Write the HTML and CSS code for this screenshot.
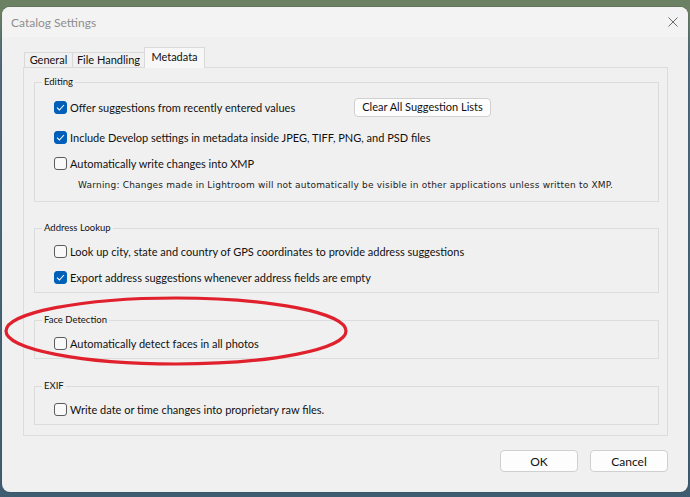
FILE: index.html
```html
<!DOCTYPE html>
<html lang="en">
<head>
    <meta charset="UTF-8">
    <title>Catalog Settings</title>
    <link rel="stylesheet" href="styles.css">
</head>
<body>
    <div class="dialog">
        <div class="titlebar">
            <span class="title">Catalog Settings</span>
            <svg class="close" width="10" height="10" viewBox="0 0 10 10">
                <path d="M0.5 0.5 L9.5 9.5 M9.5 0.5 L0.5 9.5" stroke="#6b6b6b" stroke-width="1" fill="none"/>
            </svg>
        </div>

        <div class="tabs">
            <span class="tab tab-general">General</span>
            <span class="tab tab-files">File Handling</span>
            <span class="tab tab-meta active">Metadata</span>
        </div>

        <div class="panel">
            <div class="group">
                <span class="legend">Editing</span>
                <div class="rows">
                    <div class="row row-tall">
                        <span class="check on"><svg width="9" height="7" viewBox="0 0 9 7"><path d="M1 3.6 L3.4 6 L8 1" stroke="#fff" stroke-width="1.1" fill="none"/></svg></span>
                        <span class="label label-wide">Offer suggestions from recently entered values</span>
                        <button class="btn btn-clear">Clear All Suggestion Lists</button>
                    </div>
                    <div class="row">
                        <span class="check on"><svg width="9" height="7" viewBox="0 0 9 7"><path d="M1 3.6 L3.4 6 L8 1" stroke="#fff" stroke-width="1.1" fill="none"/></svg></span>
                        <span class="label">Include Develop settings in metadata inside JPEG, TIFF, PNG, and PSD files</span>
                    </div>
                    <div class="row">
                        <span class="check"></span>
                        <span class="label">Automatically write changes into XMP</span>
                    </div>
                    <div class="warning">Warning: Changes made in Lightroom will not automatically be visible in other applications unless written to XMP.</div>
                </div>
            </div>

            <div class="group">
                <span class="legend">Address Lookup</span>
                <div class="rows">
                    <div class="row">
                        <span class="check"></span>
                        <span class="label">Look up city, state and country of GPS coordinates to provide address suggestions</span>
                    </div>
                    <div class="row">
                        <span class="check on"><svg width="9" height="7" viewBox="0 0 9 7"><path d="M1 3.6 L3.4 6 L8 1" stroke="#fff" stroke-width="1.1" fill="none"/></svg></span>
                        <span class="label">Export address suggestions whenever address fields are empty</span>
                    </div>
                </div>
            </div>

            <div class="group">
                <span class="legend">Face Detection</span>
                <div class="rows">
                    <div class="row">
                        <span class="check"></span>
                        <span class="label">Automatically detect faces in all photos</span>
                    </div>
                </div>
            </div>

            <div class="group">
                <span class="legend">EXIF</span>
                <div class="rows">
                    <div class="row">
                        <span class="check"></span>
                        <span class="label">Write date or time changes into proprietary raw files.</span>
                    </div>
                </div>
            </div>
        </div>

        <div class="footer">
            <button class="btn btn-dialog">OK</button>
            <button class="btn btn-dialog">Cancel</button>
        </div>
    </div>

    <!-- red marker drawn over the screenshot -->
    <svg class="marker" width="350" height="76" viewBox="0 0 350 76">
        <ellipse cx="174" cy="37" rx="170" ry="33" fill="none" stroke="#e0202c" stroke-width="3.2"/>
    </svg>
</body>
</html>
```

FILE: styles.css
```css
body {
    margin: 0;
    width: 690px;
    height: 497px;
    overflow: hidden;
    background: linear-gradient(180deg, #6c8064 0px, #6c8064 12px, #4f6a7c 60px, #3f5d70 100%);
    font-family: Lato, "Open Sans", sans-serif;
    font-size: 11px;
    color: #111;
}
.dialog {
    width: 686px;
    height: 485px;
    margin: 7px 0 0 2px;
    background-color: #f0f0f0;
    border-radius: 8px;
    box-shadow: 0 0 0 1px rgba(0,0,0,0.08);
    display: flex;
    flex-direction: column;
}
.titlebar {
    height: 30px;
    display: flex;
    align-items: center;
    justify-content: space-between;
    padding: 0 10px 0 9px;
    background-color: #f3f3f3;
    border-radius: 8px 8px 0 0;
}
.title {
    color: #8e8e8e;
    font-size: 12px;
}
.close {
    display: block;
    margin-top: -1px;
}
.tabs {
    position: relative;
    display: flex;
    align-items: flex-end;
    height: 21px;
    margin: 10px 0 -1px 22px;
    white-space: nowrap;
}
.tab {
    box-sizing: border-box;
    height: 16px;
    line-height: 14px;
    border: 1px solid #d9d9d9;
    border-right: none;
    background-color: #f0f0f0;
    text-align: center;
}
.tab-general { width: 48px; }
.tab-files { width: 72px; }
.tab-meta { width: 61px; }
.tab.active {
    height: 21px;
    line-height: 18px;
    border-right: 1px solid #d9d9d9;
    border-bottom: none;
    background-color: #f7f7f7;
}
.panel {
    width: 645px;
    height: 369px;
    box-sizing: border-box;
    margin-left: 21px;
    padding: 14px 8px 0 10px;
    border: 1px solid #dcdcdc;
    background-color: #f0f0f0;
}
.group {
    border: 1px solid #dcdcdc;
    padding-bottom: 2px;
    margin-bottom: 27px;
}
.group:first-child {
    margin-bottom: 26px;
}
.legend {
    display: block;
    width: fit-content;
    margin: -7px 0 0 7px;
    padding: 0 2px;
    height: 12px;
    line-height: 12px;
    font-size: 9.5px;
    background-color: #f0f0f0;
}
.rows {
    padding: 4px 0 0 19px;
}
.row {
    height: 26px;
    display: flex;
    align-items: center;
}
.row-tall {
    height: 30px;
    margin-bottom: 2px;
}
.check {
    box-sizing: border-box;
    width: 13px;
    height: 13px;
    margin-right: 3px;
    border: 1px solid #5c5c5c;
    border-radius: 3px;
    background-color: #f9f9f9;
    display: flex;
    align-items: center;
    justify-content: center;
    flex: none;
}
.check.on {
    border-color: #005fb8;
    background-color: #005fb8;
}
.label {
    white-space: nowrap;
}
.label-wide {
    width: 284px;
}
.warning {
    height: 18px;
    line-height: 18px;
    margin: 0 0 5px 24px;
    font-family: "DejaVu Sans", sans-serif;
    font-size: 9px;
    letter-spacing: 0.2px;
    color: #222;
    white-space: nowrap;
}
.btn {
    font-family: inherit;
    font-size: 11px;
    color: #111;
    background-color: #fdfdfd;
    border: 1px solid #d0d0d0;
    border-radius: 4px;
    padding: 0;
    white-space: nowrap;
    cursor: pointer;
}
.btn-clear {
    width: 137px;
    height: 19px;
    line-height: 16px;
}
.footer {
    display: flex;
    justify-content: flex-end;
    gap: 12px;
    margin: 14px 20px 0 0;
}
.btn-dialog {
    width: 78px;
    height: 22px;
    font-size: 12px;
}
.marker {
    position: absolute;
    left: 2px;
    top: 294px;
}
```
